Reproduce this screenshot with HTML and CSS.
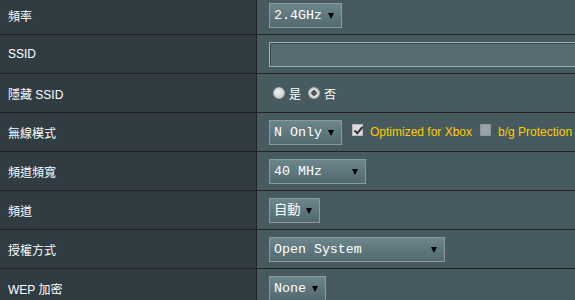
FILE: index.html
```html
<!DOCTYPE html>
<html lang="zh-Hant">
<head>
    <meta charset="UTF-8">
    <meta name="viewport" content="width=device-width, initial-scale=1.0">
    <title>無線 - 一般設定</title>
    <link rel="stylesheet" href="styles.css">
</head>
<body>
    <table class="form-table">
        <tr>
            <th>頻率</th>
            <td>
                <span class="select sel-band">
                    <select><option>2.4GHz</option><option>5GHz</option></select>
                </span>
            </td>
        </tr>
        <tr>
            <th>SSID</th>
            <td><input type="text" class="text-input" value=""></td>
        </tr>
        <tr>
            <th>隱藏 SSID</th>
            <td>
                <div class="field">
                    <label class="radio-item"><input type="radio" name="hide_ssid"> 是</label>
                    <label class="radio-item"><input type="radio" name="hide_ssid" checked> 否</label>
                </div>
            </td>
        </tr>
        <tr>
            <th>無線模式</th>
            <td>
                <div class="field">
                    <span class="select sel-mode">
                        <select><option>N Only</option><option>自動</option><option>Legacy</option></select>
                    </span>
                    <label class="check-item"><input type="checkbox" checked> Optimized for Xbox</label>
                    <label class="check-item"><input type="checkbox"> b/g Protection</label>
                </div>
            </td>
        </tr>
        <tr>
            <th>頻道頻寬</th>
            <td>
                <span class="select sel-bw">
                    <select><option>40 MHz</option><option>20 MHz</option></select>
                </span>
            </td>
        </tr>
        <tr>
            <th>頻道</th>
            <td>
                <span class="select sel-channel">
                    <select><option>自動</option><option>1</option><option>6</option><option>11</option></select>
                </span>
            </td>
        </tr>
        <tr>
            <th>授權方式</th>
            <td>
                <span class="select sel-auth">
                    <select><option>Open System</option><option>Shared Key</option><option>WPA2-Personal</option></select>
                </span>
            </td>
        </tr>
        <tr>
            <th>WEP 加密</th>
            <td>
                <span class="select sel-wep">
                    <select><option>None</option><option>WEP-64bits</option><option>WEP-128bits</option></select>
                </span>
            </td>
        </tr>
    </table>
</body>
</html>
```

FILE: styles.css
```css
body {
    margin: 0;
    background-color: #475a5f;
    font-family: "Liberation Sans", Arial, "Noto Sans CJK TC", sans-serif;
    font-size: 12px;
    color: #fff;
    overflow: hidden;
}
.form-table {
    width: 100%;
    margin-top: -4px;
    border-collapse: separate;
    border-spacing: 0;
    table-layout: fixed;
}
.form-table th,
.form-table td {
    height: 38px;
    padding: 0;
    border-bottom: 1px solid #222;
    vertical-align: middle;
}
.form-table th {
    width: 248px;
    padding-left: 8px;
    text-align: left;
    font-weight: normal;
    background-color: #313c42;
    border-right: 1px solid #222;
}
.form-table td {
    padding-left: 12px;
    background-color: #475a5f;
    overflow: hidden;
    white-space: nowrap;
}
.field {
    display: flex;
    align-items: center;
}

/* select boxes */
.select {
    position: relative;
    display: inline-block;
    vertical-align: middle;
}
.select select {
    appearance: none;
    -webkit-appearance: none;
    display: block;
    width: 100%;
    height: 25px;
    margin: 0;
    padding: 0 0 0 4px;
    font-family: "Liberation Mono", "Courier New", "Noto Sans CJK TC", monospace;
    font-size: 13.3px;
    color: #fff;
    background: linear-gradient(#6c868b, #51696f);
    border: 1px solid #8d9a9d;
    border-radius: 0;
    outline: none;
}
.select::after {
    content: "";
    position: absolute;
    right: 8px;
    top: 10px;
    border-left: 3px solid transparent;
    border-right: 3px solid transparent;
    border-top: 6px solid #000;
    pointer-events: none;
}
.sel-band { width: 73px; }
.sel-mode { width: 73px; }
.sel-bw { width: 97px; }
.sel-channel { width: 51px; }
.sel-auth { width: 176px; }
.sel-wep { width: 57px; }

/* text input */
.text-input {
    box-sizing: border-box;
    display: block;
    width: 340px;
    height: 25px;
    margin: 0;
    padding: 0 4px;
    font-family: "Liberation Mono", monospace;
    font-size: 13.3px;
    color: #fff;
    background-color: #576d73;
    border: 1px solid #a3adaf;
    box-shadow: inset 1px 1px 0 #3a4a4f;
    outline: none;
}

/* radios */
.radio-item {
    display: flex;
    align-items: center;
    gap: 4px;
    margin-left: 4px;
    margin-right: 3px;
}
.radio-item input {
    appearance: none;
    -webkit-appearance: none;
    width: 12px;
    height: 12px;
    margin: 0;
    border-radius: 50%;
    background: radial-gradient(circle at 40% 35%, #f2f2f2, #c4c4c4);
    border: 1px solid #b0b0b0;
    box-sizing: border-box;
}
.radio-item input:checked {
    background: radial-gradient(circle, #555 0, #555 2.5px, #e0e0e0 3px, #c4c4c4 100%);
}

/* checkboxes */
.check-item {
    display: flex;
    align-items: center;
    gap: 7px;
    margin-left: 10px;
    color: #ffcc00;
}
.check-item + .check-item {
    margin-left: 8px;
}
.check-item input {
    appearance: none;
    -webkit-appearance: none;
    position: relative;
    width: 11px;
    height: 12px;
    margin: 0 0 5px 0;
    background-color: #9aa3a5;
    border: 1px solid #8a9496;
    box-sizing: border-box;
}
.check-item input:checked {
    background-color: #dcdcdc;
    border-color: #b8b8b8;
}
.check-item input:checked::after {
    content: "";
    position: absolute;
    left: 3px;
    top: 0;
    width: 3px;
    height: 7px;
    border-right: 2px solid #333;
    border-bottom: 2px solid #333;
    transform: rotate(40deg);
}
```
